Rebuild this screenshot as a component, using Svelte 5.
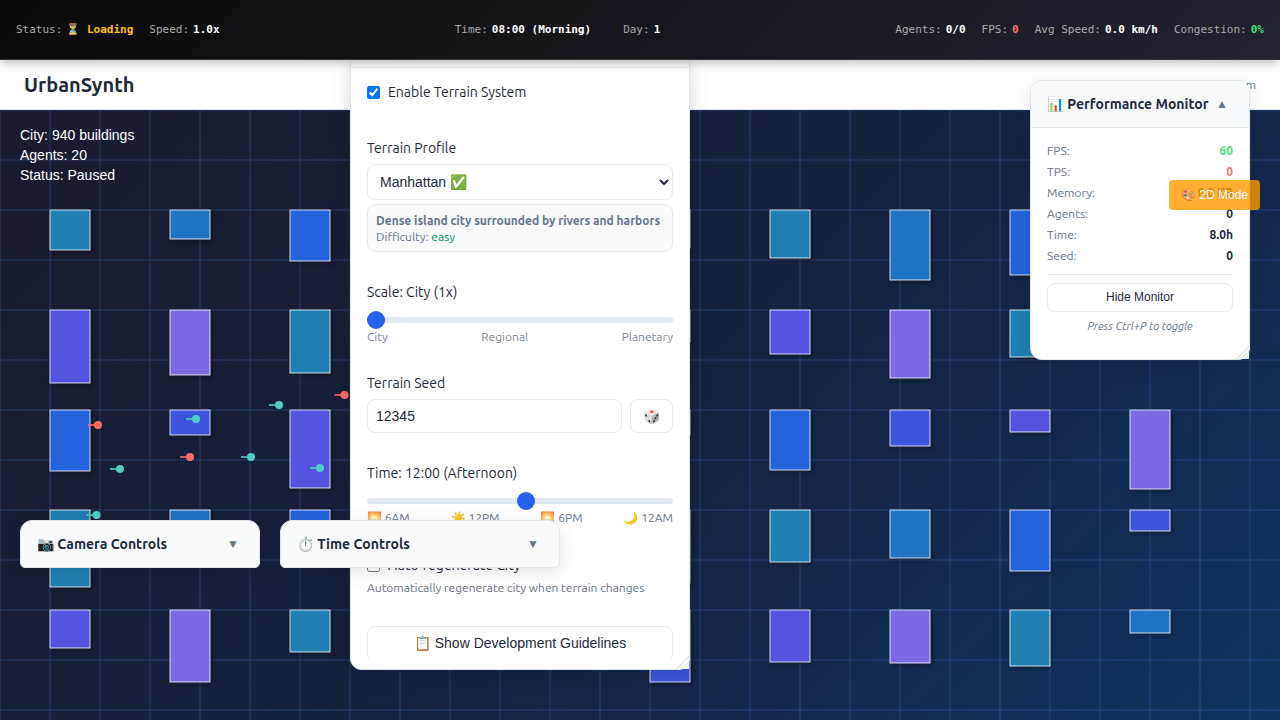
<script>
	// x position of each building column, heights per row (some sit under a panel anyway)
	const cols = [50, 170, 290, 410, 530, 650, 770, 890, 1010, 1130]
	const heights = [
		[40, 29, 51, 40, 40, 38, 48, 70, 65, 30],
		[73, 65, 63, 40, 40, 32, 44, 68, 47, 30],
		[61, 25, 78, 40, 40, 25, 60, 36, 22, 79],
		[77, 50, 50, 40, 40, 73, 52, 48, 61, 21],
		[38, 72, 42, 30, 30, 72, 52, 53, 56, 23]
	]
	const palette = ['#1f7fb0', '#2074c4', '#2563dc', '#3d55dc', '#5553e0', '#7c6ae5']

	const buildings = []
	heights.forEach((row, r) => {
		row.forEach((h, c) => {
			buildings.push({ x: cols[c], y: 100 + r * 100, h, fill: palette[(c + r * 4) % 6] })
		})
	})

	const vLines = Array.from({ length: 26 }, (_, i) => i * 50)
	const hLines = Array.from({ length: 13 }, (_, i) => i * 50)

	const agents = [
		{ x: 98, y: 315, c: '#ff6b6b' },
		{ x: 120, y: 359, c: '#4ecdc4' },
		{ x: 196, y: 309, c: '#4ecdc4' },
		{ x: 190, y: 347, c: '#ff6b6b' },
		{ x: 251, y: 347, c: '#4ecdc4' },
		{ x: 279, y: 295, c: '#4ecdc4' },
		{ x: 344.5, y: 285, c: '#ff6b6b' },
		{ x: 320, y: 358, c: '#4ecdc4' },
		{ x: 96.5, y: 405, c: '#4ecdc4' }
	]

	const stats = [
		{ k: 'FPS:', v: '60', cls: 'good' },
		{ k: 'TPS:', v: '0', cls: 'bad' },
		{ k: 'Memory:', v: '0.0 KB', cls: '' },
		{ k: 'Agents:', v: '0', cls: '' },
		{ k: 'Time:', v: '8.0h', cls: '' },
		{ k: 'Seed:', v: '0', cls: '' }
	]
</script>

<div class="app">
	<div class="status-bar">
		<div class="status-group">
			<span class="item">Status:<b class="loading">⏳ Loading</b></span>
			<span class="item">Speed:<b>1.0x</b></span>
		</div>
		<div class="status-group wide">
			<span class="item">Time:<b>08:00 (Morning)</b></span>
			<span class="item">Day:<b>1</b></span>
		</div>
		<div class="status-group">
			<span class="item">Agents:<b>0/0</b></span>
			<span class="item">FPS:<b class="red">0</b></span>
			<span class="item">Avg Speed:<b>0.0 km/h</b></span>
			<span class="item">Congestion:<b class="green">0%</b></span>
		</div>
	</div>

	<header class="top">
		<h1>UrbanSynth</h1>
		<span class="tagline">Urban Simulation Platform</span>
	</header>

	<main class="stage">
		<svg class="scene" width="1280" height="610">
			<defs>
				<linearGradient id="bg" gradientUnits="userSpaceOnUse" x1="167" y1="-167" x2="1113" y2="777">
					<stop offset="0" stop-color="#1a1a2e" />
					<stop offset="0.5" stop-color="#16213e" />
					<stop offset="1" stop-color="#0f3460" />
				</linearGradient>
			</defs>
			<rect width="1280" height="610" fill="url(#bg)" />
			{#each vLines as x}
				<line x1={x} y1="0" x2={x} y2="610" class="grid" />
			{/each}
			{#each hLines as y}
				<line x1="0" y1={y} x2="1280" y2={y} class="grid" />
			{/each}
			{#each buildings as b}
				<rect x={b.x} y={b.y} width="40" height={b.h} fill={b.fill} class="building" />
			{/each}
			{#each agents as a}
				<line x1={a.x - 10} y1={a.y} x2={a.x} y2={a.y} stroke={a.c} stroke-width="2" opacity="0.8" />
				<circle cx={a.x} cy={a.y} r="4" fill={a.c} />
			{/each}
		</svg>

		<div class="readout">
			<div>City: 940 buildings</div>
			<div>Agents: 20</div>
			<div>Status: Paused</div>
		</div>

		<section class="dock camera">
			<span>📷 Camera Controls</span>
			<i>▼</i>
		</section>
		<section class="dock time">
			<span>⏱️ Time Controls</span>
			<i>▼</i>
		</section>

		<button class="mode">🎨 2D Mode</button>
	</main>

	<aside class="terrain">
		<div class="terrain-head"></div>
		<div class="terrain-body">
			<label class="check first">
				<input type="checkbox" checked />
				<span>Enable Terrain System</span>
			</label>

			<div class="field profile">
				<div class="label">Terrain Profile</div>
				<select>
					<option>Manhattan ✅</option>
					<option>San Francisco</option>
				</select>
				<div class="profile-info">
					<strong>Dense island city surrounded by rivers and harbors</strong>
					<div>Difficulty: <span class="easy">easy</span></div>
				</div>
			</div>

			<div class="field scale">
				<div class="label">Scale: City (1x)</div>
				<input type="range" min="0" max="2" value="0" />
				<div class="ticks">
					<span>City</span><span>Regional</span><span>Planetary</span>
				</div>
			</div>

			<div class="field seed">
				<div class="label">Terrain Seed</div>
				<div class="seed-row">
					<input type="text" value="12345" />
					<button>🎲</button>
				</div>
			</div>

			<div class="field clock">
				<div class="label">Time: 12:00 (Afternoon)</div>
				<input type="range" min="0" max="23" value="12" />
				<div class="ticks">
					<span>🌅 6AM</span><span>☀️ 12PM</span><span>🌅 6PM</span><span>🌙 12AM</span>
				</div>
			</div>

			<label class="check auto">
				<input type="checkbox" />
				<span>Auto-regenerate City</span>
			</label>
			<div class="help">Automatically regenerate city when terrain changes</div>

			<button class="guidelines">📋 Show Development Guidelines</button>
		</div>
	</aside>

	<aside class="monitor">
		<div class="monitor-head">
			<span>📊 Performance Monitor</span>
			<i>▲</i>
		</div>
		<div class="monitor-body">
			{#each stats as s}
				<div class="stat">
					<span>{s.k}</span>
					<b class={s.cls}>{s.v}</b>
				</div>
			{/each}
			<hr />
			<button class="hide">Hide Monitor</button>
			<p>Press Ctrl+P to toggle</p>
		</div>
	</aside>
</div>

<style>
	:global(body) {
		margin: 0;
		overflow: hidden;
	}
	.app {
		--ui: Ubuntu, "Noto Sans", sans-serif;
		--form: "Liberation Sans", Arial, sans-serif;
		position: relative;
		display: flex;
		flex-direction: column;
		height: 720px;
		font-family: var(--ui);
		color: #1e293b;
	}

	/* status bar */
	.status-bar {
		position: relative;
		z-index: 5;
		display: flex;
		justify-content: space-between;
		align-items: center;
		box-sizing: border-box;
		height: 60px;
		padding: 0 16px;
		background: linear-gradient(135deg, #0a0a0a, #232330);
		border-bottom: 1px solid #333;
		box-shadow: 0 2px 10px rgba(0, 0, 0, 0.3);
		font: 11px "DejaVu Sans Mono", monospace;
		color: #aaa;
	}
	.status-group {
		display: flex;
		gap: 16px;
	}
	.status-group.wide {
		gap: 32px;
	}
	.item b {
		margin-left: 4px;
		color: #fff;
	}
	.item b.loading {
		color: #ffc107;
	}
	.item b.red {
		color: #ff6b6b;
	}
	.item b.green {
		color: #4ade80;
	}

	/* header */
	.top {
		display: flex;
		justify-content: space-between;
		align-items: center;
		box-sizing: border-box;
		height: 50px;
		padding: 0 24px;
		background: #fff;
		border-bottom: 1px solid #e2e8f0;
	}
	.top h1 {
		margin: 0;
		font-size: 20px;
		font-weight: 600;
	}
	.tagline {
		font-size: 12px;
		color: #64748b;
	}

	/* canvas */
	.stage {
		position: relative;
		flex: 1;
		overflow: hidden;
	}
	.scene {
		display: block;
	}
	.grid {
		stroke: #4a78e2;
		stroke-opacity: 0.33;
		stroke-width: 1;
	}
	.building {
		stroke: rgba(255, 255, 255, 0.8);
		stroke-width: 1;
		filter: drop-shadow(2px 2px 2px rgba(0, 0, 0, 0.3));
	}
	.readout {
		position: absolute;
		top: 15px;
		left: 20px;
		font: 14px/20px var(--form);
		color: #fff;
	}
	.dock {
		position: absolute;
		top: 410px;
		display: flex;
		justify-content: space-between;
		align-items: center;
		box-sizing: border-box;
		height: 48px;
		padding: 0 20px 0 16px;
		background: #f8fafc;
		border: 1px solid #e2e8f0;
		border-radius: 12px 12px 5px 5px;
		box-shadow: 0 4px 20px rgba(0, 0, 0, 0.1);
		font-size: 14px;
		font-weight: 700;
		z-index: 3;
	}
	.dock i,
	.monitor-head i {
		font-style: normal;
		font-weight: 400;
		font-size: 12px;
		color: #64748b;
	}
	.camera {
		left: 20px;
		width: 240px;
	}
	.time {
		left: 280px;
		width: 280px;
	}
	.mode {
		position: absolute;
		top: 70px;
		right: 20px;
		z-index: 4;
		width: 91px;
		height: 30px;
		padding: 0;
		border: 0;
		border-radius: 4px;
		background: rgba(255, 152, 0, 0.8);
		font: 12px var(--form);
		color: #fff;
	}

	/* terrain panel */
	.terrain {
		position: absolute;
		top: 60px;
		left: 350px;
		z-index: 2;
		display: flex;
		flex-direction: column;
		box-sizing: border-box;
		width: 340px;
		height: 610px;
		padding-bottom: 11px;
		overflow: hidden;
		resize: both;
		background: #fff;
		border: 1px solid #e2e8f0;
		border-top: 0;
		border-radius: 0 0 12px 12px;
		box-shadow: 0 4px 20px rgba(0, 0, 0, 0.15);
		font-size: 14px;
	}
	.terrain::-webkit-resizer,
	.monitor::-webkit-resizer {
		background:
			linear-gradient(135deg, #fff 50%, transparent 50%),
			repeating-linear-gradient(135deg, #e2e8f0 0 1px, #fff 1px 3px);
	}
	.terrain-head {
		flex: none;
		height: 7px;
		background: #f8fafc;
		border-bottom: 1px solid #e2e8f0;
	}
	.terrain-body {
		flex: 1;
		min-height: 0;
		overflow: hidden;
		padding: 16px 16px 0;
	}
	.check {
		display: flex;
		align-items: center;
		height: 16px;
		gap: 8px;
		line-height: 16px;
	}
	.check input {
		margin: 0;
		width: 13px;
		height: 13px;
	}
	.field .label {
		line-height: 21px;
	}
	.profile {
		margin-top: 38px;
	}
	.profile .label,
	.seed .label {
		margin-bottom: 5px;
	}
	select {
		display: block;
		box-sizing: border-box;
		width: 100%;
		height: 36px;
		padding: 0 8px;
		background: #fff;
		border: 1px solid #e2e8f0;
		border-radius: 8px;
		font: 14px var(--form);
		color: #1e293b;
	}
	.profile-info {
		box-sizing: border-box;
		height: 48px;
		margin-top: 4px;
		padding: 8px;
		background: #f8fafc;
		border: 1px solid #e2e8f0;
		border-radius: 8px;
		font-size: 12px;
		line-height: 16px;
		color: #64748b;
	}
	.easy {
		color: #059669;
	}
	.scale {
		margin-top: 30px;
	}
	.seed {
		margin-top: 28px;
	}
	.clock {
		margin-top: 30px;
	}
	input[type="range"] {
		display: block;
		appearance: none;
		-webkit-appearance: none;
		width: 100%;
		height: 18px;
		margin: 8px 0 0;
		background: transparent;
	}
	input[type="range"]::-webkit-slider-runnable-track {
		height: 6px;
		border-radius: 3px;
		background: #e2e8f0;
	}
	input[type="range"]::-webkit-slider-thumb {
		-webkit-appearance: none;
		width: 18px;
		height: 18px;
		margin-top: -6px;
		border-radius: 50%;
		background: #2563eb;
	}
	.ticks {
		display: flex;
		justify-content: space-between;
		font-size: 12px;
		line-height: 16px;
		color: #7b8794;
	}
	.clock .ticks {
		color: #64748b;
	}
	.seed-row {
		display: flex;
		gap: 8px;
	}
	.seed-row input {
		flex: 1;
		min-width: 0;
		box-sizing: border-box;
		height: 34px;
		padding: 0 8px;
		border: 1px solid #e2e8f0;
		border-radius: 8px;
		font: 14px var(--form);
		color: #1e293b;
	}
	.seed-row button {
		width: 43px;
		height: 34px;
		padding: 0;
		background: #fff;
		border: 1px solid #e2e8f0;
		border-radius: 8px;
		font: 14px var(--form);
	}
	.auto {
		margin-top: 31px;
	}
	.help {
		margin-top: 7px;
		font-size: 12px;
		line-height: 16px;
		color: #64748b;
	}
	.guidelines {
		display: block;
		box-sizing: border-box;
		width: 100%;
		height: 36px;
		margin-top: 30px;
		padding: 0 0 2px;
		background: #fff;
		border: 1px solid #e2e8f0;
		border-radius: 8px;
		font: 14px var(--form);
		color: #1e293b;
	}

	/* monitor */
	.monitor {
		position: absolute;
		top: 80px;
		left: 1030px;
		z-index: 3;
		box-sizing: border-box;
		width: 220px;
		height: 280px;
		overflow: hidden;
		resize: both;
		background: #fff;
		border: 1px solid #e2e8f0;
		border-radius: 12px;
		box-shadow: 0 4px 20px rgba(0, 0, 0, 0.1);
	}
	.monitor-head {
		display: flex;
		justify-content: space-between;
		align-items: center;
		box-sizing: border-box;
		height: 47px;
		padding: 0 21px 0 16px;
		background: #f8fafc;
		border-bottom: 1px solid #e2e8f0;
		font-size: 14px;
		font-weight: 700;
	}
	.monitor-body {
		padding: 12px 16px 0;
	}
	.stat {
		display: flex;
		justify-content: space-between;
		font-size: 12px;
		line-height: 21px;
		color: #64748b;
	}
	.stat b {
		color: #1e293b;
	}
	.stat b.good {
		color: #4ade80;
	}
	.stat b.bad {
		color: #f87171;
	}
	hr {
		height: 1px;
		margin: 8px 0;
		border: 0;
		background: #e2e8f0;
	}
	.hide {
		display: block;
		box-sizing: border-box;
		width: 100%;
		height: 29px;
		padding: 0 0 2px;
		background: #fff;
		border: 1px solid #e2e8f0;
		border-radius: 8px;
		font: 12px var(--form);
		color: #1e293b;
	}
	.monitor p {
		margin: 6px 0 0;
		text-align: center;
		font-size: 11px;
		font-style: italic;
		line-height: 16px;
		color: #64748b;
	}
</style>
